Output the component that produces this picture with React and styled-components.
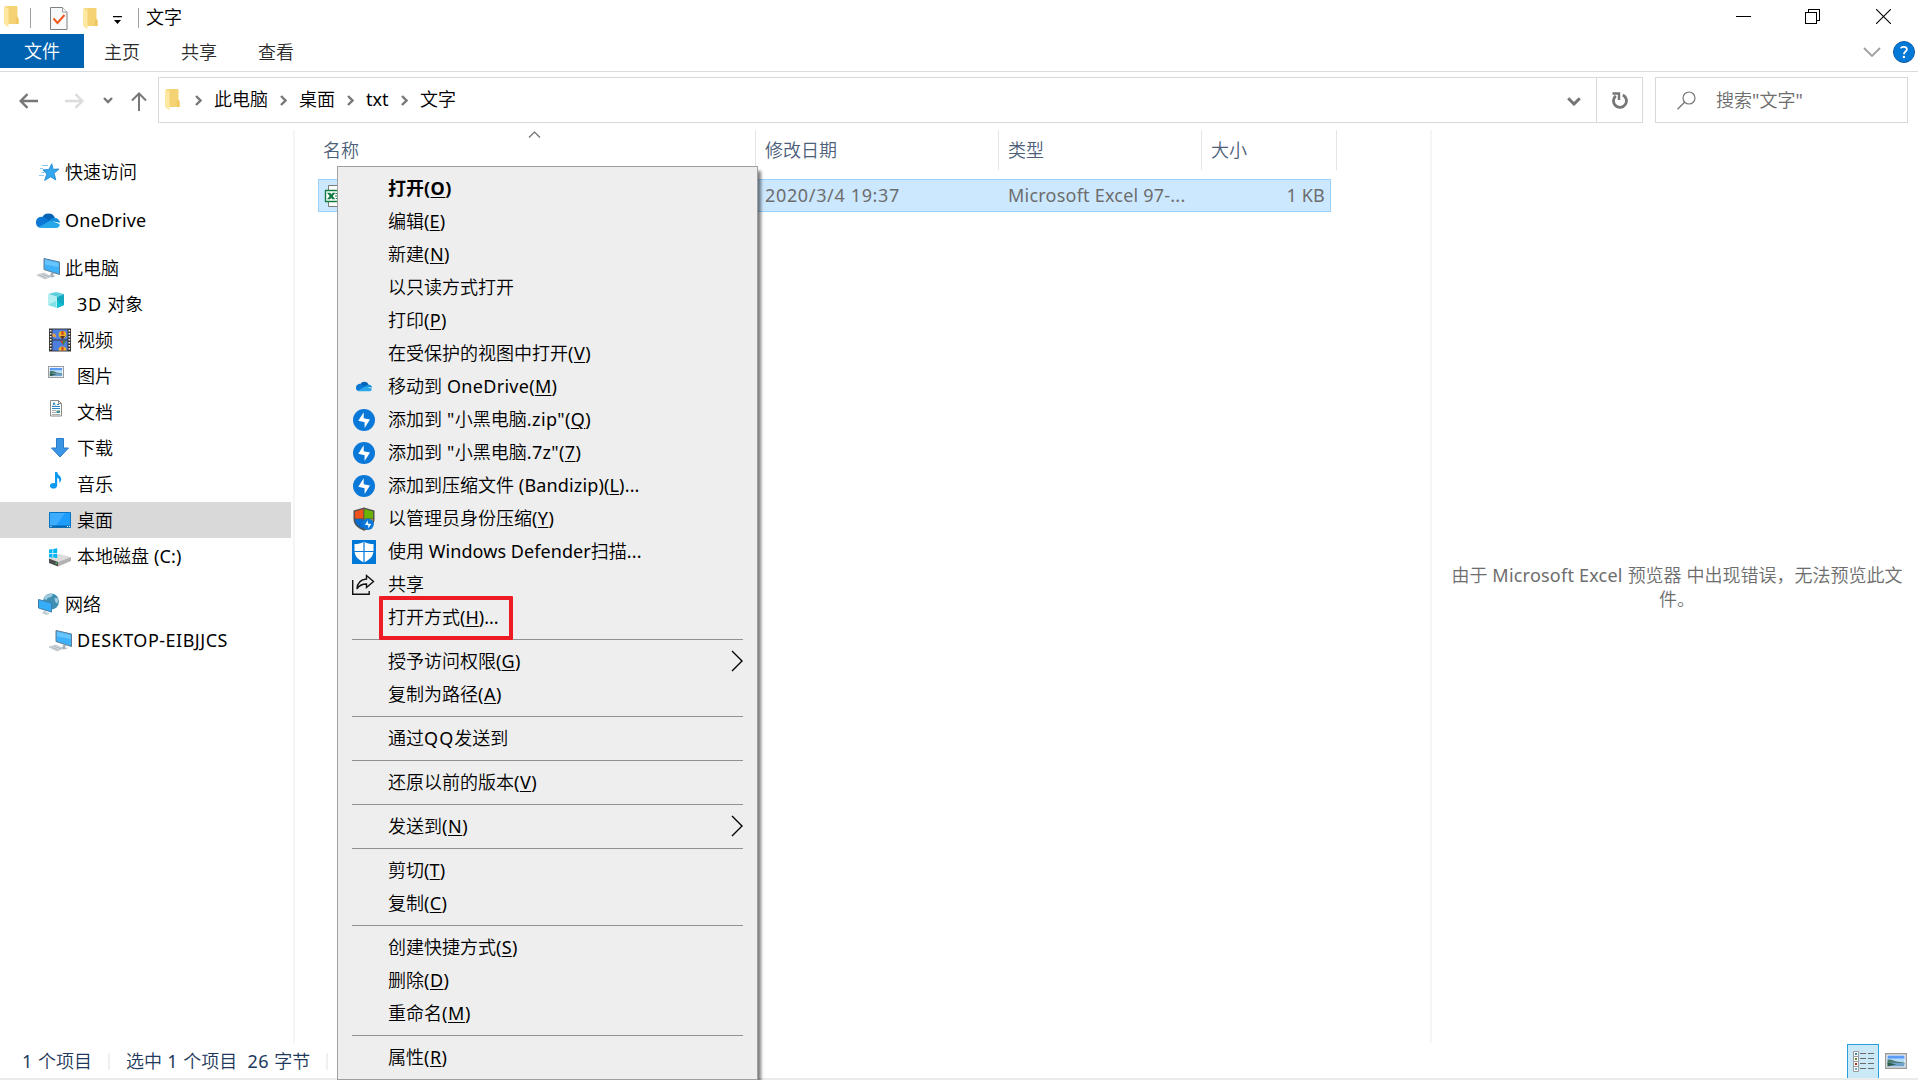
import React from 'react';
import styled, { createGlobalStyle } from 'styled-components';

const Global = createGlobalStyle`
  *, *::before, *::after { box-sizing: border-box; }
  body { margin: 0; background: #fff; overflow: hidden; }
  svg { display: block; flex: none; }
`;

const Window = styled.div`
  position: relative;
  width: 1918px;
  height: 1080px;
  overflow: hidden;
  display: flex;
  flex-direction: column;
  background: #fff;
  color: #000;
  font-family: 'Noto Sans', 'Noto Sans CJK SC', sans-serif;
  font-size: 18px;
  line-height: 24px;
  font-weight: 350;
  white-space: nowrap;
`;

/* ---------- title bar and ribbon ---------- */
const TitleBar = styled.header`
  height: 34px;
  display: flex;
  align-items: flex-start;
`;
const QuickAccess = styled.div`
  display: flex;
  align-items: flex-start;
  padding: 6px 0 0 4px;
  width: 146px;
`;
const QuickSlot = styled.div`
  margin: ${(p) => p.$top || 0}px 0 0 ${(p) => p.$gap || 0}px;
`;
const QuickDivider = styled.div`
  width: 1px;
  height: 20px;
  background: #a0a0a0;
  margin: 2px 0 0 ${(p) => p.$gap}px;
`;
const Title = styled.div`
  padding-top: 5px;
  flex: 1;
`;
const WindowControls = styled.div`
  display: flex;
  padding: 9px 27px 0 0;
`;
const ControlSlot = styled.div`
  margin-left: ${(p) => p.$gap}px;
`;
const Ribbon = styled.nav`
  height: 38px;
  display: flex;
  border-bottom: 1px solid #dadbdc;
`;
const FileTab = styled.div`
  width: 84px;
  height: 34px;
  padding: 5px 0 0 24px;
  background: #0063b1;
  color: #fff;
`;
const Tab = styled.div`
  width: 77px;
  padding: 6px 0 0 20px;
  color: #2b2b2b;
`;
const RibbonTools = styled.div`
  display: flex;
  align-items: flex-start;
  gap: 12px;
  margin-left: auto;
  padding: 7px 3px 0 0;
`;
const ChevronSlot = styled.div`
  padding-top: 6px;
`;

/* ---------- address row ---------- */
const AddressRow = styled.div`
  height: 58px;
  display: flex;
  align-items: flex-start;
  padding: 5px 10px 0 0;
`;
const NavButtons = styled.div`
  flex: none;
  width: 158px;
  height: 46px;
  display: flex;
  align-items: center;
  padding-left: 19px;
`;
const NavSlot = styled.div`
  margin-left: ${(p) => p.$gap}px;
  padding-top: ${(p) => p.$drop || 0}px;
`;
const AddressBox = styled.div`
  flex: none;
  width: 1485px;
  height: 46px;
  display: flex;
  align-items: center;
  border: 1px solid #d9d9d9;
  padding-left: 6px;
`;
const Crumbs = styled.div`
  display: flex;
  align-items: center;
  flex: 1;
`;
const Crumb = styled.span`
  width: ${(p) => p.$w}px;
  padding-bottom: 2px;
`;
const CrumbArrow = styled.div`
  width: 7px;
  margin: 1px ${(p) => p.$after || 12}px 0 ${(p) => p.$before || 12}px;
`;
const HistoryButton = styled.div`
  width: 44px;
  display: flex;
  justify-content: center;
  padding: 2px 0 0;
`;
const RefreshButton = styled.div`
  width: 46px;
  height: 44px;
  border-left: 1px solid #d9d9d9;
  display: flex;
  align-items: center;
  padding: 2px 0 0 15px;
`;
const SearchBox = styled.div`
  flex: none;
  width: 253px;
  height: 46px;
  margin-left: 12px;
  border: 1px solid #d9d9d9;
  display: flex;
  align-items: center;
  gap: 20px;
  padding-left: 21px;
  color: #6d6d6d;
`;

/* ---------- body ---------- */
const Body = styled.main`
  height: 913px;
  display: flex;
`;
const Sidebar = styled.aside`
  flex: none;
  width: 295px;
  padding-top: 24px;
  border-right: 2px solid #f5f5f5;
`;
const Group = styled.div`
  margin-bottom: 12px;
`;
const TreeItem = styled.div`
  width: 291px;
  height: 36px;
  display: flex;
  align-items: center;
  gap: 5px;
  padding-left: ${(p) => (p.$nested ? 48 : 36)}px;
  background: ${(p) => (p.$selected ? '#d9d9d9' : 'transparent')};
`;
const TreeLabel = styled.span`
  padding-bottom: 1px;
`;
const FileList = styled.section`
  flex: none;
  width: 1135px;
  padding-left: 23px;
`;
const Columns = styled.div`
  display: flex;
  height: 40px;
  color: #4c607a;
`;
const Column = styled.div`
  position: relative;
  width: ${(p) => p.$w}px;
  padding: 8px 0 0 ${(p) => p.$pad || 9}px;
  border-right: 1px solid #e5e5e5;
`;
const SortMark = styled.div`
  position: absolute;
  top: 1px;
  left: 210px;
`;
const FileRow = styled.div`
  width: 1013px;
  height: 33px;
  margin-top: 9px;
  display: flex;
  align-items: center;
  background: #cce8ff;
  border: 1px solid #99d1ff;
  color: #6d6d6d;
`;
const Cell = styled.div`
  width: ${(p) => p.$w}px;
  padding: 0 5px 2px ${(p) => p.$pad || 0}px;
  text-align: ${(p) => p.$align || 'left'};
`;
const IconCell = styled.div`
  width: 446px;
  padding-left: 5px;
`;
const Preview = styled.section`
  flex: 1;
  border-left: 2px solid #f5f5f5;
  padding: 433px 10px 0 14px;
  text-align: center;
  color: #6d6d6d;
`;
const PreviewLine = styled.div``;

/* ---------- status bar ---------- */
const StatusBar = styled.footer`
  height: 37px;
  display: flex;
  align-items: flex-start;
  padding: 0 11px 0 22px;
  border-bottom: 2px solid #ebebeb;
  color: #1e395b;
`;
const StatusText = styled.span`
  width: ${(p) => p.$w}px;
  padding-top: 6px;
  white-space: pre;
`;
const StatusDivider = styled.div`
  width: 2px;
  height: 17px;
  margin: 10px ${(p) => p.$after || 0}px 0 0;
  background: #f0f0f0;
`;
const ViewModes = styled.div`
  display: flex;
  gap: 6px;
  margin-left: auto;
`;
const ActiveView = styled.div`
  width: 32px;
  height: 34px;
  margin-top: 1px;
  border: 1px solid #26a0da;
  border-bottom: 0;
  background: #cbe8f6;
  padding: 6px 0 0 5px;
`;
const ThumbView = styled.div`
  padding-top: 10px;
`;

/* ---------- text ---------- */
/* Latin runs are heavier and tracked slightly wider than the Chinese text around them. */
const LatinRun = styled.span`
  letter-spacing: ${(p) => p.$track}px;
  font-weight: ${(p) => (p.$bold ? 700 : 400)};
`;
const Mixed = ({ children, track = 0.2 }) =>
  String(children)
    .split(/([\x20-\x7e]+)/)
    .filter(Boolean)
    .map((part, i) =>
      /^[\x20-\x7e]/.test(part) ? <LatinRun key={i} $track={track}>{part}</LatinRun> : part
    );

/* ---------- context menu ---------- */
const Menu = styled.div`
  position: absolute;
  left: 337px;
  top: 166px;
  width: 421px;
  height: 914px;
  padding: 5px 0;
  background: #eeeeee;
  border: 1px solid #a0a0a0;
  box-shadow: 4px 4px 3px -1px rgba(0, 0, 0, 0.5);
  color: #000;
`;
const MenuItem = styled.div`
  position: relative;
  height: 33px;
  display: flex;
  align-items: center;
  padding: 0 14px;
  font-weight: ${(p) => (p.$bold ? 700 : 'inherit')};
`;
const MenuIcon = styled.div`
  width: 36px;
  height: 24px;
  display: flex;
  align-items: center;
  flex: none;
`;
const MenuLabel = styled.span`
  flex: 1;
  padding-bottom: 1px;
`;
const Key = styled.span`
  text-decoration: underline;
  text-decoration-thickness: 1px;
  text-underline-offset: 2px;
`;
const MenuRule = styled.div`
  height: 11px;
  padding: 5px 14px;
  &::before {
    content: '';
    display: block;
    height: 1px;
    background: #919191;
  }
`;
const Highlight = styled.div`
  position: absolute;
  left: 41px;
  top: -5px;
  width: 134px;
  height: 44px;
  border: 4px solid #ed1c24;
  border-radius: 1px;
`;
const SubmenuArrow = styled.div`
  padding-bottom: 2px;
`;

/* ---------- icons ---------- */
const Folder = () => (
  <svg width="15" height="22" viewBox="0 0 15 22">
    <path d="M4 0h8.500a1 1 0 0 1 1 1v9.500l1 1.500v6H4z" fill="#f5d374" />
    <path d="M0 1l4.500 1.800V21.500L0 18z" fill="#ffe9a2" />
    <path d="M0 1L2 0h3L4.500 3z" fill="#f7da82" />
    <path d="M12 11l2.500 1.500V18H12z" fill="#efc75e" />
  </svg>
);
const CheckDoc = () => (
  <svg width="18" height="23" viewBox="0 0 18 23">
    <path d="M.5.500h12l4.500 4.500v17.500H.500z" fill="#f7f9fb" stroke="#7f7f7f" />
    <path d="M12.500.500V5H17" fill="#fff" stroke="#9a9a9a" />
    <path d="M3.500 11.500l4 4.500 7-8" fill="none" stroke="#f25a1c" strokeWidth="2" />
  </svg>
);
const Customize = () => (
  <svg width="10" height="9" viewBox="0 0 10 9">
    <path d="M0 0h9v1.200H0zM1 4h7L4.500 8z" fill="#000" />
  </svg>
);
const Stroke = ({ w, h, d, color = '#7a7a7a', sw = 2, crisp }) => (
  <svg width={w} height={h} viewBox={`0 0 ${w} ${h}`} shapeRendering={crisp ? 'crispEdges' : 'auto'}>
    <path d={d} fill="none" stroke={color} strokeWidth={sw} />
  </svg>
);
const Help = () => (
  <svg width="22" height="22" viewBox="0 0 22 22">
    <circle cx="11" cy="11" r="10.500" fill="#0078d7" stroke="#0a5ea8" />
    <path d="M8 7.400C8.300 5.300 13.900 5 13.900 8.200c0 2.300-3 2.300-3 5" fill="none" stroke="#fff" strokeWidth="1.800" />
    <circle cx="10.900" cy="16" r="1.200" fill="#fff" />
  </svg>
);
const Refresh = () => (
  <svg width="17" height="18" viewBox="0 0 17 18">
    <path d="M10.800 3A6.500 6.500 0 1 1 3.800 3.800" fill="none" stroke="#757575" strokeWidth="2.800" />
    <path d="M.5 1.500H7V8" fill="none" stroke="#757575" strokeWidth="2.400" />
  </svg>
);
const Search = () => (
  <svg width="19" height="19" viewBox="0 0 19 19">
    <circle cx="12" cy="7" r="6" fill="none" stroke="#757575" strokeWidth="1.200" />
    <path d="M7.600 11.200L.5 18.300" stroke="#757575" strokeWidth="1.300" />
  </svg>
);
const Star = () => (
  <svg width="24" height="24" viewBox="0 0 24 24">
    <path d="M15.800 3.800l1.200 5.500 6-.3-4.800 4.300 1.600 6.700-5.200-3.200-6 3.700 2.200-6.500L7 9.800l5.800-.2z" fill="#35a7ee" stroke="#1683cf" strokeWidth=".8" />
    <path d="M6 5.500h6M4 8.500h3M5.500 12.500h3M3 15.500h5" stroke="#8ccbf5" />
  </svg>
);
const Cloud = ({ size = 24 }) => (
  <svg width={size} height={size} viewBox="0 0 24 24">
    <path d="M6 10a7 7 0 0 1 13 0l-2 4-8-1z" fill="#0364b8" />
    <path d="M0 14.500A5.500 5.500 0 0 1 8 9.300l7 4.200L3 19.500A5 5 0 0 1 0 14.500z" fill="#0a78d4" />
    <path d="M13 12.500a7 7 0 0 1 6-2.500 5 5 0 0 1 5 4.800z" fill="#1490df" />
    <path d="M2.500 19.200L14.500 12.400l9 3.600c.8 2-1 4-3.500 4H5.500a5 5 0 0 1-3-.8z" fill="#28a8ea" />
  </svg>
);
const Computer = () => (
  <svg width="24" height="24" viewBox="0 0 24 24">
    <path d="M8 2.500l15.500 3.500V18.500L8 13.500z" fill="#3fb1fa" stroke="#5e7c92" />
    <path d="M9 3.800L22.500 7v4L9 8.500z" fill="#66c4ff" />
    <path d="M15 16.300l3 1-1 2.200 3 .6-4 1.400-4-1.500 2.500-.8z" fill="#a4b1bb" />
    <path d="M1 19l7-2 7 3.500-6 2.500z" fill="#d9dee2" stroke="#b3bcc3" strokeWidth=".7" />
    <path d="M3.500 19.200l7 2.600M6 18.300l7 2.500" stroke="#98a4ad" strokeWidth=".7" />
  </svg>
);
const Cube = () => (
  <svg width="24" height="24" viewBox="0 0 24 24">
    <path d="M0 2l8-2 8 2-7 3z" fill="#5fcfdb" />
    <path d="M0 2l9 3v11l-9-3z" fill="#b4eff2" />
    <path d="M9 5l7-3v11l-7 3z" fill="#15a9c1" />
    <path d="M0 13l8-4v6.500z" fill="#7fe0e6" />
    <path d="M9 9l7 4-7 3z" fill="#0bbfd0" />
  </svg>
);
const Film = () => (
  <svg width="24" height="24" viewBox="0 0 24 24">
    <path d="M1 .5h22v23H1z" fill="#353535" />
    <path d="M4.500 1.500h15v10h-15zM4.500 12.500h15v10h-15z" fill="#4c7fe0" />
    <path d="M2.700 2v21M21.300 2v21" stroke="#f0f0f0" strokeWidth="1.600" strokeDasharray="1.600 1.400" />
    <circle cx="14.500" cy="6.500" r="3.800" fill="#e9b021" />
    <path d="M13.500 3h2v4h-2z" fill="#cf3a2b" />
    <path d="M12 8h5l-2 3h-1z" fill="#5c3220" />
    <path d="M4.500 5l3 1.500 1 3-4-1z" fill="#e7a33f" />
    <path d="M12 12.500h6L15 17z" fill="#c23b2b" />
    <path d="M14.500 12.500H18l-3 4.500z" fill="#2b8b48" />
    <path d="M10.500 22.500a4 4 0 0 1 8 0z" fill="#f0b429" />
    <path d="M13.500 19h2v3.500h-2z" fill="#cf3a2b" />
  </svg>
);
const Landscape = ({ w = 22, h = 16 }) => (
  <svg width={w} height={h} viewBox="0 0 22 16" preserveAspectRatio="none">
    <path d="M.7.700h20.600v14.600H.700z" fill="#fff" stroke="#9c9c9c" strokeWidth="1.400" />
    <path d="M2.500 2.500h17v4h-17z" fill="#5a9cf5" />
    <path d="M2.500 5.500h17V9h-17z" fill="#b7dcf7" />
    <path d="M2.500 6.500c4-.5 6 1 9 2l8 1V11h-17z" fill="#4a7a6a" />
    <path d="M2.500 9.500l17 .5v3.500h-17z" fill="#6fa3cb" />
    <path d="M2.500 9.500c4 .5 5 1.500 9 1.800l-9 2.200z" fill="#2f5b4a" />
  </svg>
);
const PictureSlot = styled.div`
  width: 24px;
  height: 24px;
  padding-top: 2px;
`;
const PictureIcon = () => (
  <PictureSlot><Landscape w={16} h={12} /></PictureSlot>
);
const DocIcon = () => (
  <svg width="24" height="24" viewBox="0 0 24 24">
    <path d="M2.500.500h8l3 3v12.500h-11z" fill="#fff" stroke="#8a8a8a" />
    <path d="M10.500.500v3h3" fill="none" stroke="#8a8a8a" />
    <path d="M4 6.500h8M4 8.500h8" stroke="#2d87c9" />
    <path d="M4 10.500h4M4 12.500h4M4 14.500h8" stroke="#a6adb3" />
    <path d="M5 5.500l1-3 1.200 3M9 4.500h2" stroke="#2d87c9" fill="none" />
    <path d="M8.500 10.500h3.500v2.500H8.500z" fill="#3f8f8a" />
  </svg>
);
const Download = () => (
  <svg width="24" height="24" viewBox="0 0 24 24">
    <path d="M8.500 2.500h7V12h5L12 21 3.500 12h5z" fill="#3a94e4" stroke="#2a7dca" />
  </svg>
);
const Note = () => (
  <svg width="24" height="24" viewBox="0 0 24 24">
    <ellipse cx="5.500" cy="13.700" rx="3.500" ry="2.800" fill="#0c99f2" />
    <path d="M7 0h2.200c.3 3 4 3.800 4 7 0 2-1 3-2 4 .5-3 .2-4.500-2-5.200V14H7z" fill="#0c99f2" />
  </svg>
);
const Desktop = () => (
  <svg width="24" height="24" viewBox="0 0 24 24">
    <path d="M1.500 4.500h21v15h-21z" fill="#1c9dfb" stroke="#0873bf" />
    <path d="M2 5h15L8 17.500H2z" fill="#3fadff" />
    <path d="M2 18.300h20" stroke="#0a63a8" strokeWidth="1.600" />
    <path d="M2.500 18.500h1M19 18.500h1M21 18.500h1" stroke="#fff" />
  </svg>
);
const Disk = () => (
  <svg width="24" height="24" viewBox="0 0 24 24">
    <path d="M1 14.500l10-4.500L23 13 10 18z" fill="#dcdcdc" />
    <path d="M1 14.500l9 3.500v4.500l-9-3.500z" fill="#4c4c4c" />
    <path d="M10 18l13-5v4l-13 5.500z" fill="#b2b2b2" />
    <path d="M7.500 18.900l1.500.6" stroke="#3fd84a" strokeWidth="1.500" />
    <path d="M1 5.500L4.500 5v4H1zM5.200 4.900l4-.6V9h-4zM1 9.700h3.500v4L1 13.200zM5.200 9.700h4V14l-4-.5z" fill="#06b6f2" />
  </svg>
);
const Network = () => (
  <svg width="24" height="24" viewBox="0 0 24 24">
    <circle cx="15" cy="9.500" r="8" fill="#3f8fb5" />
    <path d="M9 4.500c2-2.500 6-3 8-2l-2 2.500-3.500 1-1 2-2.500-1zM18.500 6l3 0c1 2 .8 4-.5 5.500l-2-2z" fill="#9fcbdc" />
    <path d="M2.500 7.500L15.500 11v9L2.500 16z" fill="#35adf8" stroke="#3c7fae" />
    <path d="M7.500 18.500l3 1v1l4 .500-4 2-5-2 2-.8z" fill="#c5ccd1" />
  </svg>
);
const ExcelDoc = () => (
  <svg width="24" height="24" viewBox="0 0 24 24">
    <path d="M4.500 1.500h16v21h-16z" fill="#fff" stroke="#7a7a7a" />
    <path d="M1.500 6.500h14v11h-14z" fill="#fff" stroke="#107c41" strokeWidth="1.400" />
    <path d="M3 8.700h3.200l5 6.600H8.200z" fill="#107c41" />
    <path d="M8.700 8.700h2.800l-5.500 6.600H3z" fill="#107c41" />
    <path d="M11.500 9.500h2.500M11 12h2M11.800 14.500h2.200" stroke="#107c41" strokeWidth="1.200" />
  </svg>
);
const Bandizip = () => (
  <svg width="24" height="24" viewBox="0 0 24 24">
    <circle cx="12" cy="12" r="11" fill="#0a78d8" />
    <path d="M11.700 4.300V10.300L18 11.600 12.600 20V14.200L6.300 12.800z" fill="#fff" />
  </svg>
);
const AdminShield = () => (
  <svg width="24" height="24" viewBox="0 0 24 24">
    <path d="M12 .5l10.500 3v9c0 5-4.500 9-10.500 11.200C6 21.500 1.500 17.500 1.500 12.500v-9z" fill="#50524f" />
    <path d="M11.300 2L3 4.500v7h8.300z" fill="#f1511b" />
    <path d="M12.300 2L21 4.500v7h-8.700z" fill="#6bb300" />
    <path d="M3 12.300h8.300V22C6.500 20 3 17 3 12.300z" fill="#0a6ccc" />
    <path d="M12.300 12.300H21c-.5 4.500-4 8-8.700 9.700z" fill="#f0a72b" />
    <circle cx="16" cy="17.200" r="5.800" fill="#0a78d8" />
    <path d="M15.800 13.200v3.200l3.400.7-2.900 4.400v-3.200L13 17.700z" fill="#fff" />
  </svg>
);
const Defender = () => (
  <svg width="24" height="24" viewBox="0 0 24 24">
    <path d="M0 0h24v24H0z" fill="#0078d7" />
    <path d="M12 1.500c2.500 2 6 2.500 9.500 2.500v7c0 5-4 9-9.500 11.500C6.500 20 2.500 16 2.500 11V4C6 4 9.500 3.500 12 1.500z" fill="#fff" />
    <path d="M12 1v22M2 11.500h20" stroke="#0078d7" strokeWidth="1.200" />
  </svg>
);
const Share = () => (
  <svg width="24" height="24" viewBox="0 0 24 24">
    <path d="M.7 7v14.300h16.500V18" fill="none" stroke="#111" strokeWidth="1.400" />
    <path d="M14.500 2.500l7 6-7 6V11c-4.500 0-7.500 1.500-9.500 5 .3-5.500 3-9.500 9.500-10z" fill="none" stroke="#111" strokeWidth="1.400" />
  </svg>
);
const Details = () => (
  <svg width="22" height="22" viewBox="0 0 22 22">
    {[
      [0.5, '#3a7fb5'],
      [5.5, '#6a8a2a'],
      [10.5, '#b0301f'],
      [15.5, '#6fa8c8'],
    ].map(([y, c]) => (
      <g key={y}>
        <path d={`M.5 ${y}h5v5h-5z`} fill="#fff" stroke="#9a9a9a" />
        <path d={`M2 ${y + 1.5}h2v2h-2z`} fill={c} />
        <path d={`M7 ${y + 2}h6M15 ${y + 2}h6`} stroke="#6b6b6b" />
      </g>
    ))}
  </svg>
);

/* ---------- data ---------- */
const tree = [
  [{ label: '快速访问', Icon: Star }],
  [{ label: 'OneDrive', Icon: Cloud }],
  [
    { label: '此电脑', Icon: Computer },
    { label: '3D 对象', Icon: Cube, nested: true, track: 0.7 },
    { label: '视频', Icon: Film, nested: true },
    { label: '图片', Icon: PictureIcon, nested: true },
    { label: '文档', Icon: DocIcon, nested: true },
    { label: '下载', Icon: Download, nested: true },
    { label: '音乐', Icon: Note, nested: true },
    { label: '桌面', Icon: Desktop, nested: true, selected: true },
    { label: '本地磁盘 (C:)', Icon: Disk, nested: true },
  ],
  [
    { label: '网络', Icon: Network },
    { label: 'DESKTOP-EIBJJCS', Icon: Computer, nested: true, track: 0.5 },
  ],
];

const SmallCloudBox = styled.div`
  padding: 0 0 2px 4px;
`;
const SmallCloud = () => (
  <SmallCloudBox><Cloud size={16} /></SmallCloudBox>
);

const menu = [
  [
    { text: '打开', k: 'O', bold: true, track: 0.5 },
    { text: '编辑', k: 'E' },
    { text: '新建', k: 'N', track: 0.5 },
    { text: '以只读方式打开' },
    { text: '打印', k: 'P', track: 0.3 },
    { text: '在受保护的视图中打开', k: 'V', track: 0.5 },
    { text: '移动到 OneDrive', k: 'M', Icon: SmallCloud, track: 0.3 },
    { text: '添加到 "小黑电脑.zip"', k: 'Q', Icon: Bandizip, track: 0.4 },
    { text: '添加到 "小黑电脑.7z"', k: '7', Icon: Bandizip, track: 0.35 },
    { text: '添加到压缩文件 (Bandizip)', k: 'L', tail: '...', Icon: Bandizip, track: 0.15 },
    { text: '以管理员身份压缩', k: 'Y', Icon: AdminShield, track: 0.4 },
    { text: '使用 Windows Defender扫描...', Icon: Defender, track: 0.07 },
    { text: '共享', Icon: Share },
    { text: '打开方式', k: 'H', tail: '...', marked: true, track: 0 },
  ],
  [
    { text: '授予访问权限', k: 'G', sub: true },
    { text: '复制为路径', k: 'A', track: 0.6 },
  ],
  [{ text: '通过QQ发送到', track: 1.1 }],
  [{ text: '还原以前的版本', k: 'V', track: 0.5 }],
  [{ text: '发送到', k: 'N', sub: true, track: 0.6 }],
  [
    { text: '剪切', k: 'T' },
    { text: '复制', k: 'C', track: 0.4 },
  ],
  [
    { text: '创建快捷方式', k: 'S', track: 0.3 },
    { text: '删除', k: 'D', track: 0.5 },
    { text: '重命名', k: 'M', track: 0.6 },
  ],
  [{ text: '属性', k: 'R', track: 0.5 }],
];

const ContextMenu = () => (
  <Menu>
    {menu.map((group, i) => (
      <React.Fragment key={i}>
        {i > 0 && <MenuRule />}
        {group.map(({ text, k, tail, Icon, bold, sub, marked, track = 0.2 }) => (
          <MenuItem key={text} $bold={bold}>
            <MenuIcon>{Icon && <Icon />}</MenuIcon>
            <MenuLabel>
              <Mixed track={track}>{text}</Mixed>
              <LatinRun $track={track} $bold={bold}>
                {k && <>(<Key>{k}</Key>)</>}
                {tail}
              </LatinRun>
            </MenuLabel>
            {sub && (
              <SubmenuArrow>
                <Stroke w={12} h={22} d="M1 1l10 10-10 10" color="#000" sw={1.4} />
              </SubmenuArrow>
            )}
            {marked && <Highlight />}
          </MenuItem>
        ))}
      </React.Fragment>
    ))}
  </Menu>
);

const Arrow = () => <Stroke w={7} h={11} d="M1 1l4.500 4.500L1 10" color="#777" sw={2.4} />;

export default function App() {
  return (
    <Window>
      <Global />
      <TitleBar>
        <QuickAccess>
          <Folder />
          <QuickDivider $gap={11} />
          <QuickSlot $gap={19} $top={1}><CheckDoc /></QuickSlot>
          <QuickSlot $gap={15} $top={2}><Folder /></QuickSlot>
          <QuickSlot $gap={15} $top={10}><Customize /></QuickSlot>
          <QuickDivider $gap={15} />
        </QuickAccess>
        <Title>文字</Title>
        <WindowControls>
          <ControlSlot $gap={0}><Stroke w={15} h={15} d="M0 7.500h15" color="#000" sw={1} crisp /></ControlSlot>
          <ControlSlot $gap={54}><Stroke w={15} h={15} d="M.5 3.500h11v11H.500zM3.500 3.500v-3h11v11h-3" color="#000" sw={1} crisp /></ControlSlot>
          <ControlSlot $gap={56}><Stroke w={15} h={15} d="M0 0l15 15M15 0L0 15" color="#000" sw={1.1} /></ControlSlot>
        </WindowControls>
      </TitleBar>
      <Ribbon>
        <FileTab>文件</FileTab>
        <Tab>主页</Tab>
        <Tab>共享</Tab>
        <Tab>查看</Tab>
        <RibbonTools>
          <ChevronSlot><Stroke w={18} h={11} d="M1 1l8 8 8-8" color="#a0a0a0" sw={1.8} /></ChevronSlot>
          <Help />
        </RibbonTools>
      </Ribbon>
      <AddressRow>
        <NavButtons>
          <NavSlot $gap={0} $drop={1}><Stroke w={19} h={16} d="M19 8H2M8.500 1.200L1.700 8l6.800 6.800" color="#777" sw={2.4} /></NavSlot>
          <NavSlot $gap={27} $drop={1}><Stroke w={19} h={16} d="M0 8h17M10.500 1.200L17.300 8l-6.800 6.800" color="#dcdcdc" sw={2.4} /></NavSlot>
          <NavSlot $gap={19} $drop={0}><Stroke w={10} h={7} d="M1 1l4 4 4-4" color="#777" sw={2.4} /></NavSlot>
          <NavSlot $gap={18} $drop={3}><Stroke w={16} h={19} d="M8 19V1.500M1 8.500l7-7 7 7" color="#777" sw={2} /></NavSlot>
        </NavButtons>
        <AddressBox>
          <Crumbs>
            <Folder />
            <CrumbArrow $before={15}><Arrow /></CrumbArrow>
            <Crumb $w={54}>此电脑</Crumb>
            <CrumbArrow><Arrow /></CrumbArrow>
            <Crumb $w={36}>桌面</Crumb>
            <CrumbArrow $after={12}><Arrow /></CrumbArrow>
            <Crumb $w={23}><Mixed track={0}>txt</Mixed></Crumb>
            <CrumbArrow><Arrow /></CrumbArrow>
            <Crumb $w={36}>文字</Crumb>
          </Crumbs>
          <HistoryButton><Stroke w={14} h={9} d="M1.200 1.200L7 7l5.800-5.800" color="#757575" sw={3} /></HistoryButton>
          <RefreshButton><Refresh /></RefreshButton>
        </AddressBox>
        <SearchBox>
          <Search />
          <span><Mixed>搜索"文字"</Mixed></span>
        </SearchBox>
      </AddressRow>
      <Body>
        <Sidebar>
          {tree.map((group, i) => (
            <Group key={i}>
              {group.map(({ label, Icon, nested, selected, track }) => (
                <TreeItem key={label} $nested={nested} $selected={selected}>
                  <Icon />
                  <TreeLabel><Mixed track={track}>{label}</Mixed></TreeLabel>
                </TreeItem>
              ))}
            </Group>
          ))}
        </Sidebar>
        <FileList>
          <Columns>
            <Column $w={438} $pad={5}>
              名称
              <SortMark><Stroke w={13} h={7} d="M1 6.500l5.500-5.500L12 6.500" color="#6d6d6d" sw={1.2} /></SortMark>
            </Column>
            <Column $w={243}>修改日期</Column>
            <Column $w={203}>类型</Column>
            <Column $w={135}>大小</Column>
          </Columns>
          <FileRow>
            <IconCell><ExcelDoc /></IconCell>
            <Cell $w={243}><Mixed track={0.65}>2020/3/4 19:37</Mixed></Cell>
            <Cell $w={203}><Mixed track={0.22}>Microsoft Excel 97-...</Mixed></Cell>
            <Cell $w={119} $align="right"><Mixed>1 KB</Mixed></Cell>
          </FileRow>
        </FileList>
        <Preview>
          <PreviewLine><Mixed track={0.22}>由于 Microsoft Excel 预览器 中出现错误，无法预览此文</Mixed></PreviewLine>
          <PreviewLine>件。</PreviewLine>
        </Preview>
      </Body>
      <StatusBar>
        <StatusText $w={86}><Mixed track={0.5}>1 个项目</Mixed></StatusText>
        <StatusDivider $after={16} />
        <StatusText $w={200}><Mixed track={0.5}>{'选中 1 个项目  26 字节'}</Mixed></StatusText>
        <StatusDivider />
        <ViewModes>
          <ActiveView><Details /></ActiveView>
          <ThumbView><Landscape /></ThumbView>
        </ViewModes>
      </StatusBar>
      <ContextMenu />
    </Window>
  );
}
